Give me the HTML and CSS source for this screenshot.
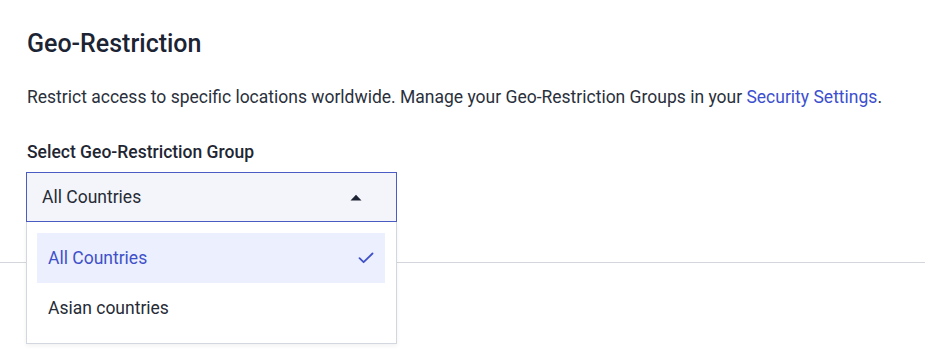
FILE: index.html
```html
<!DOCTYPE html>
<html lang="en">
<head>
<meta charset="utf-8">
<title>Geo-Restriction</title>
<link rel="stylesheet" href="styles.css">
</head>
<body>
<main class="section">
  <h2 class="title">Geo-Restriction</h2>
  <p class="desc">Restrict access to specific locations worldwide. Manage your Geo-Restriction Groups in your <a class="link" href="#">Security Settings</a>.</p>
  <div class="field">
    <label class="label">Select Geo-Restriction Group</label>
    <div class="select-wrap">
      <div class="select">
        <span class="select-value">All Countries</span>
        <svg class="caret" width="12" height="7" viewBox="0 0 12 7"><path d="M0.5 6.5 L6 0.8 L11.5 6.5 Z" fill="#1c2333"/></svg>
      </div>
      <ul class="menu">
        <li class="option selected">
          <span>All Countries</span>
          <svg class="check" width="16" height="12" viewBox="0 0 16 12"><path d="M1.5 6.2 L5.6 10.2 L14.5 1.5" fill="none" stroke="#3f51c9" stroke-width="1.8" stroke-linecap="round" stroke-linejoin="round"/></svg>
        </li>
        <li class="option">Asian countries</li>
      </ul>
    </div>
  </div>
  <hr class="divider">
</main>
</body>
</html>
```
FILE: styles.css
```css
* { box-sizing: border-box; }
html, body { margin: 0; padding: 0; background: #ffffff; }
body {
  min-height: 100vh;
  font-family: Roboto, "Liberation Sans", sans-serif;
  color: #1f2633;
}
.section {
  min-height: 349px;
  padding: 28px 0 0 27px;
}
.title {
  margin: 0;
  font-size: 25px;
  line-height: 32px;
  font-weight: 500;
  color: #1c2434;
}
.desc {
  margin: 24px 0 0;
  font-size: 17.5px;
  line-height: 26px;
  color: #2a303c;
}
.link {
  color: #3c4fcf;
  text-decoration: none;
}
.field {
  margin-top: 30px;
}
.label {
  display: block;
  font-size: 17.5px;
  font-weight: 500;
  line-height: 24px;
  color: #1f2633;
}
.select-wrap {
  position: relative;
  z-index: 5;
  width: 371px;
  margin-top: 8px;
  margin-left: -1px;
}
.select {
  display: flex;
  align-items: center;
  justify-content: space-between;
  height: 50px;
  padding: 0 34px 0 15px;
  border: 1px solid #4b5cc4;
  background: #f4f5fa;
  font-size: 17.5px;
  color: #262b36;
}
.caret { display: block; }
.menu {
  position: absolute;
  top: 100%;
  left: 0;
  right: 0;
  margin: 0;
  padding: 11px 11px 10px 10px;
  list-style: none;
  background: #ffffff;
  border: 1px solid #d3d7df;
  border-top: none;
  box-shadow: 0 2px 4px rgba(30, 40, 60, 0.06);
}
.option {
  display: flex;
  align-items: center;
  justify-content: space-between;
  height: 50px;
  padding: 0 11px 0 11px;
  font-size: 17.5px;
  color: #262b36;
}
.option.selected {
  background: #eceffd;
  color: #3f51c9;
}
.check { display: block; }
.divider {
  margin: 40px 0 0 -27px;
  border: none;
  border-top: 1px solid #d3d6db;
}
```
